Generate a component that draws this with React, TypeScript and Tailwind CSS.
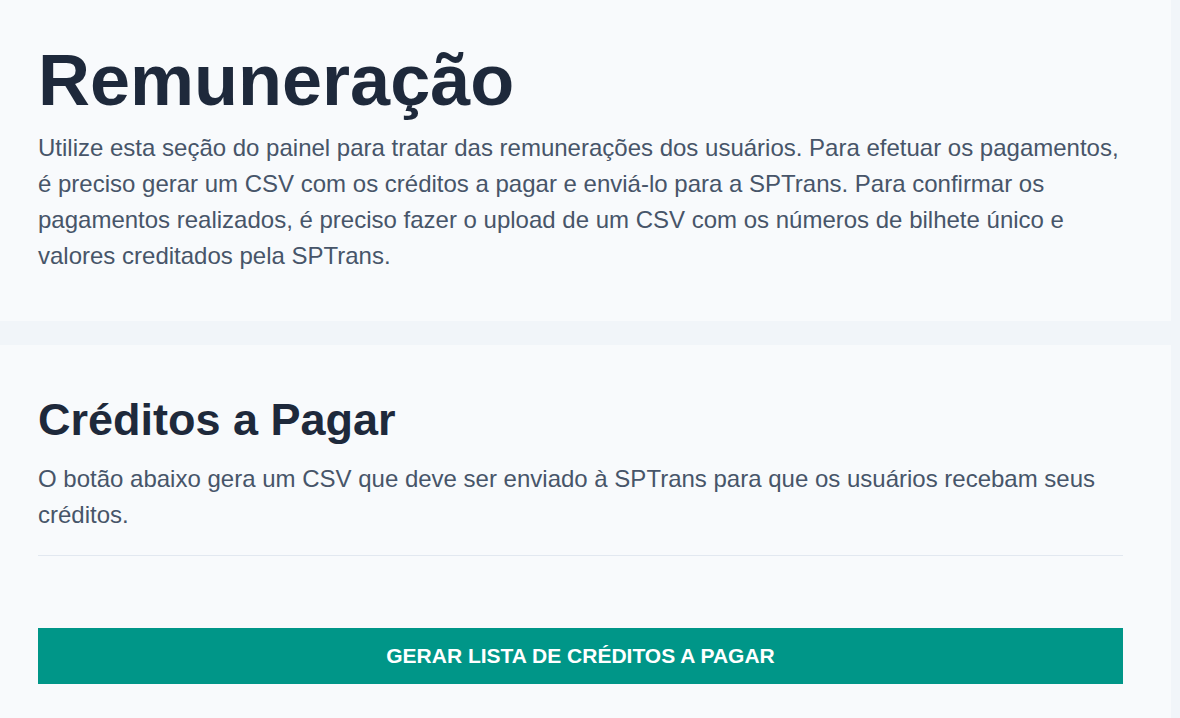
export default function App() {
  return (
    <div
      className="min-h-[718px] bg-[#f1f5f9] pr-[9px] flex flex-col gap-[24px]"
      style={{ fontFamily: '"Liberation Sans", Arial, sans-serif' }}
    >
      <section className="bg-[#f8fafc] pl-[38px] pr-[48px] pt-[44px] pb-[47px]">
        <h1 className="text-[72px] leading-none font-bold text-[#1e293b]">Remuneração</h1>
        <p className="mt-[14px] text-[24px] leading-[36px] text-[#475569]">
          Utilize esta seção do painel para tratar das remunerações dos usuários. Para efetuar os pagamentos,
          é preciso gerar um CSV com os créditos a pagar e enviá-lo para a SPTrans. Para confirmar os
          pagamentos realizados, é preciso fazer o upload de um CSV com os números de bilhete único e
          valores creditados pela SPTrans.
        </p>
      </section>

      <section className="flex-1 bg-[#f8fafc] pl-[38px] pr-[48px] pt-[48px] pb-[40px]">
        <h2 className="text-[45px] leading-[54px] font-bold text-[#1e293b]">Créditos a Pagar</h2>
        <p className="mt-[14px] text-[24px] leading-[36px] text-[#475569]">
          O botão abaixo gera um CSV que deve ser enviado à SPTrans para que os usuários recebam seus
          créditos.
        </p>
        <hr className="mt-[22px] border-0 border-t border-[#e2e8f0]" />
        <button className="mt-[72px] w-full h-[56px] bg-[#009688] text-white text-[21px] font-bold uppercase">
          Gerar lista de créditos a pagar
        </button>
      </section>
    </div>
  );
}
